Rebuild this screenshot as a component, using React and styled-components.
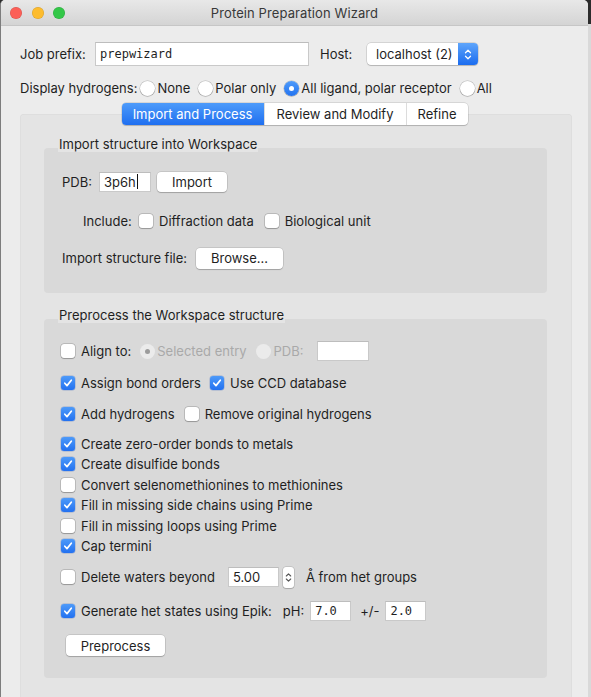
import React from 'react';
import styled, { createGlobalStyle } from 'styled-components';

const GlobalStyle = createGlobalStyle`
  html, body { margin: 0; padding: 0; }
  body {
    background: linear-gradient(#2c2c2c 0 24px, #d9d9d9 24px);
    font-family: Inter, "Liberation Sans", sans-serif;
    font-size: 13px;
    color: #1f1f1f;
    -webkit-font-smoothing: antialiased;
  }
`;

const Window = styled.div`
  width: 588px;
  height: 697px;
  overflow: hidden;
  box-sizing: border-box;
  background: #ececec;
  border-left: 1px solid #7d7d7d;
  border-radius: 5px 5px 0 0;
  display: flex;
  flex-direction: column;
`;

const TitleBar = styled.div`
  height: 25px;
  flex: none;
  border-bottom: 1px solid #c6c6c6;
  background: linear-gradient(#e8e8e8, #d4d4d4);
  display: grid;
  grid-template-columns: 1fr auto 1fr;
  align-items: center;
  padding: 0 9px;
`;

const Lights = styled.div`
  display: flex;
  gap: 9.5px;
`;

const Light = styled.span`
  width: 12px;
  height: 12px;
  border-radius: 50%;
  background: ${(p) => p.$c};
  box-shadow: inset 0 0 0 0.5px rgba(0, 0, 0, 0.15);
`;

const Title = styled.div`
  font-size: 13px;
  color: #383838;
  letter-spacing: 0.1px;
`;

const Content = styled.div`
  padding: 16px 0 0 19px;
  display: flex;
  flex-direction: column;
`;

const Row = styled.div`
  display: flex;
  align-items: center;
  height: ${(p) => p.$h || 20}px;
  margin-top: ${(p) => p.$mt || 0}px;
  margin-left: ${(p) => p.$ml || 0}px;
  gap: ${(p) => p.$gap || 0}px;
  flex: none;
`;

const Label = styled.span`
  white-space: nowrap;
  color: ${(p) => (p.$disabled ? '#a9a9a9' : '#1f1f1f')};
  width: ${(p) => (p.$w ? p.$w + 'px' : 'auto')};
  margin-left: ${(p) => p.$ml || 0}px;
  flex: none;
`;

const TextField = styled.div`
  box-sizing: border-box;
  width: ${(p) => p.$w}px;
  height: ${(p) => p.$h || 20}px;
  margin-left: ${(p) => p.$ml || 0}px;
  background: #fff;
  border: 1px solid #c9c9c9;
  border-top-color: #bdbdbd;
  display: flex;
  align-items: center;
  padding-left: 4px;
  font-family: ${(p) => (p.$mono ? '"DejaVu Sans Mono", "Liberation Mono", monospace' : 'inherit')};
  font-size: ${(p) => (p.$mono ? '12px' : '13px')};
  flex: none;
`;

const Caret = styled.span`
  width: 1px;
  height: 15px;
  background: #111;
  margin-left: 1px;
`;

const Select = styled.div`
  box-sizing: border-box;
  width: 111px;
  height: 22px;
  margin-left: ${(p) => p.$ml || 0}px;
  background: #fff;
  border-radius: 4px;
  box-shadow: 0 0 0 0.5px rgba(0, 0, 0, 0.2), 0 1px 1px rgba(0, 0, 0, 0.15);
  display: flex;
  align-items: center;
  justify-content: space-between;
  padding-left: 9px;
  overflow: hidden;
`;

const SelectArrows = styled.div`
  width: 20px;
  height: 22px;
  background: linear-gradient(#5ea5fb, #1b6cef);
  display: flex;
  align-items: center;
  justify-content: center;
`;

const Button = styled.div`
  box-sizing: border-box;
  width: ${(p) => p.$w}px;
  height: ${(p) => p.$h || 20}px;
  margin-left: ${(p) => p.$ml || 0}px;
  background: #fff;
  border-radius: 4px;
  box-shadow: 0 0 0 0.5px rgba(0, 0, 0, 0.18), 0 1px 1px rgba(0, 0, 0, 0.18);
  display: flex;
  align-items: center;
  justify-content: center;
  flex: none;
`;

const RadioGroup = styled.div`
  display: flex;
  align-items: center;
  gap: 8px;
  margin-left: 3px;
`;

const RadioOption = styled.label`
  display: flex;
  align-items: center;
  gap: ${(p) => p.$gap ?? 2}px;
  margin-left: ${(p) => p.$ml || 0}px;
`;

const RadioDot = styled.span`
  box-sizing: border-box;
  width: 15px;
  height: 15px;
  border-radius: 50%;
  flex: none;
  display: flex;
  align-items: center;
  justify-content: center;
  background: ${(p) => (p.$on && !p.$disabled ? 'linear-gradient(#4f9bfa, #2273f0)' : p.$disabled ? '#ebebeb' : '#fff')};
  box-shadow: ${(p) => (p.$disabled ? 'none' : '0 0 0 0.5px rgba(0,0,0,0.22), 0 0.5px 1px rgba(0,0,0,0.2)')};
  &::after {
    content: '';
    display: ${(p) => (p.$on ? 'block' : 'none')};
    width: 5px;
    height: 5px;
    border-radius: 50%;
    background: ${(p) => (p.$disabled ? '#9c9c9c' : '#fff')};
  }
`;

const Box = styled.span`
  box-sizing: border-box;
  width: 14px;
  height: 14px;
  border-radius: 3px;
  flex: none;
  display: flex;
  align-items: center;
  justify-content: center;
  background: ${(p) => (p.$on ? 'linear-gradient(#4d9af9, #2371f0)' : '#fff')};
  box-shadow: ${(p) => (p.$on ? '0 0 0 0.5px rgba(0,60,180,0.3)' : '0 0 0 0.5px rgba(0,0,0,0.25), 0 0.5px 1px rgba(0,0,0,0.2)')};
`;

const Check = styled.label`
  display: flex;
  align-items: center;
  gap: 6px;
  margin-left: ${(p) => p.$ml || 0}px;
  flex: none;
`;

const Tabs = styled.div`
  display: flex;
  align-self: center;
  margin: 6px 0 0 -19px;
  height: 22px;
  border-radius: 4px;
  background: #fff;
  box-shadow: 0 0 0 0.5px rgba(0, 0, 0, 0.18), 0 1px 1px rgba(0, 0, 0, 0.15);
  position: relative;
  z-index: 1;
  overflow: hidden;
`;

const Tab = styled.div`
  width: ${(p) => p.$w}px;
  display: flex;
  align-items: center;
  justify-content: center;
  color: ${(p) => (p.$active ? '#fff' : '#1f1f1f')};
  background: ${(p) => (p.$active ? 'linear-gradient(#4d9bfa, #1f6ff0)' : 'transparent')};
  border-left: ${(p) => (p.$first ? 'none' : '1px solid #dcdcdc')};
`;

const Panel = styled.div`
  width: 552px;
  margin-top: -11px;
  box-sizing: border-box;
  background: #e4e4e4;
  border-radius: 4px;
  box-shadow: inset 0 0 0 0.5px rgba(0, 0, 0, 0.05);
  padding: 22px 25px 40px 24px;
  display: flex;
  flex-direction: column;
`;

const GroupTitle = styled.div`
  align-self: flex-start;
  line-height: 16px;
  margin: ${(p) => p.$mt || 0}px 0 -4px 14px;
  padding: 0 1px;
  background: #e4e4e4;
  position: relative;
  z-index: 1;
`;

const GroupBox = styled.div`
  background: #d9d9d9;
  border-radius: 4px;
  padding: ${(p) => p.$pad};
  display: flex;
  flex-direction: column;
`;

const Tick = () => (
  <svg width="10" height="10" viewBox="0 0 10 10">
    <path d="M1.8 5.2 L4 7.6 L8.3 2.2" fill="none" stroke="#fff" strokeWidth="1.7" strokeLinecap="round" strokeLinejoin="round" />
  </svg>
);

const Chevrons = ({ color, w = 8, h = 13 }) => (
  <svg width={w} height={h} viewBox="0 0 8 13">
    <path d="M1.5 4.8 L4 2.3 L6.5 4.8 M1.5 8.2 L4 10.7 L6.5 8.2" fill="none" stroke={color} strokeWidth="1.3" strokeLinecap="round" strokeLinejoin="round" />
  </svg>
);

const Stepper = styled.div`
  width: 11px;
  height: 21px;
  margin-left: 4px;
  background: #fff;
  border-radius: 3px;
  box-shadow: 0 0 0 0.5px rgba(0, 0, 0, 0.2), 0 1px 1px rgba(0, 0, 0, 0.15);
  display: flex;
  align-items: center;
  justify-content: center;
  flex: none;
`;

const CheckItem = ({ on, children, ml }) => (
  <Check $ml={ml}>
    <Box $on={on}>{on && <Tick />}</Box>
    <Label>{children}</Label>
  </Check>
);

const Radio = ({ on, disabled, children, ml, gap }) => (
  <RadioOption $ml={ml} $gap={gap}>
    <RadioDot $on={on} $disabled={disabled} />
    <Label $disabled={disabled}>{children}</Label>
  </RadioOption>
);

const options = [
  { t: 'Create zero-order bonds to metals', on: true, mt: 10 },
  { t: 'Create disulfide bonds', on: true, mt: 0 },
  { t: 'Convert selenomethionines to methionines', on: false, mt: 1 },
  { t: 'Fill in missing side chains using Prime', on: true, mt: 0 },
  { t: 'Fill in missing loops using Prime', on: false, mt: 1 },
  { t: 'Cap termini', on: true, mt: 0 },
];

export default function App() {
  return (
    <>
      <GlobalStyle />
      <Window>
        <TitleBar>
          <Lights>
            <Light $c="#fc5f57" />
            <Light $c="#fdbc2e" />
            <Light $c="#33c748" />
          </Lights>
          <Title>Protein Preparation Wizard</Title>
          <span />
        </TitleBar>
        <Content>
          <Row $h={24}>
            <Label $w={75}>Job prefix:</Label>
            <TextField $w={214} $h={24} $mono>prepwizard</TextField>
            <Label $ml={11} $w={47}>Host:</Label>
            <Select>
              <span>localhost (2)</span>
              <SelectArrows>
                <Chevrons color="#fff" />
              </SelectArrows>
            </Select>
          </Row>
          <Row $h={18} $mt={13}>
            <Label>Display hydrogens:</Label>
            <RadioGroup>
              <Radio>None</Radio>
              <Radio>Polar only</Radio>
              <Radio on>All ligand, polar receptor</Radio>
              <Radio>All</Radio>
            </RadioGroup>
          </Row>
          <Tabs>
            <Tab $w={142} $active $first>Import and Process</Tab>
            <Tab $w={141}>Review and Modify</Tab>
            <Tab $w={61}>Refine</Tab>
          </Tabs>
          <Panel>
            <GroupTitle>Import structure into Workspace</GroupTitle>
            <GroupBox $pad="23px 0 24px 18px">
              <Row $h={21}>
                <Label $w={37}>PDB:</Label>
                <TextField $w={52}>
                  3p6h<Caret />
                </TextField>
                <Button $w={70} $ml={6}>Import</Button>
              </Row>
              <Row $mt={19} $ml={21}>
                <Label $w={56}>Include:</Label>
                <CheckItem>Diffraction data</CheckItem>
                <CheckItem ml={11}>Biological unit</CheckItem>
              </Row>
              <Row $h={22} $mt={16}>
                <Label $w={134}>Import structure file:</Label>
                <Button $w={87} $h={21}>Browse...</Button>
              </Row>
            </GroupBox>

            <GroupTitle $mt={14}>Preprocess the Workspace structure</GroupTitle>
            <GroupBox $pad="22px 0 22px 17px">
              <Row>
                <CheckItem>Align to:</CheckItem>
                <Radio on disabled ml={9} gap={2}>Selected entry</Radio>
                <Radio disabled ml={9} gap={3}>PDB:</Radio>
                <TextField $w={52} $ml={13} />
              </Row>
              <Row $mt={12}>
                <CheckItem on>Assign bond orders</CheckItem>
                <CheckItem on ml={9}>Use CCD database</CheckItem>
              </Row>
              <Row $mt={11}>
                <CheckItem on>Add hydrogens</CheckItem>
                <CheckItem ml={10}>Remove original hydrogens</CheckItem>
              </Row>
              {options.map((o) => (
                <Row key={o.t} $mt={o.mt}>
                  <CheckItem on={o.on}>{o.t}</CheckItem>
                </Row>
              ))}
              <Row $mt={11}>
                <CheckItem>Delete waters beyond</CheckItem>
                <TextField $w={51} $ml={13}>5.00</TextField>
                <Stepper>
                  <Chevrons color="#555" w={7} h={13} />
                </Stepper>
                <Label $ml={12}>Å from het groups</Label>
              </Row>
              <Row $mt={14}>
                <CheckItem on>Generate het states using Epik:</CheckItem>
                <Label $ml={11}>pH:</Label>
                <TextField $w={41} $ml={6} $mono>7.0</TextField>
                <Label $ml={9}>+/-</Label>
                <TextField $w={41} $ml={6} $mono>2.0</TextField>
              </Row>
              <Row $h={21} $mt={14} $ml={5}>
                <Button $w={99} $h={21}>Preprocess</Button>
              </Row>
            </GroupBox>
          </Panel>
        </Content>
      </Window>
    </>
  );
}
